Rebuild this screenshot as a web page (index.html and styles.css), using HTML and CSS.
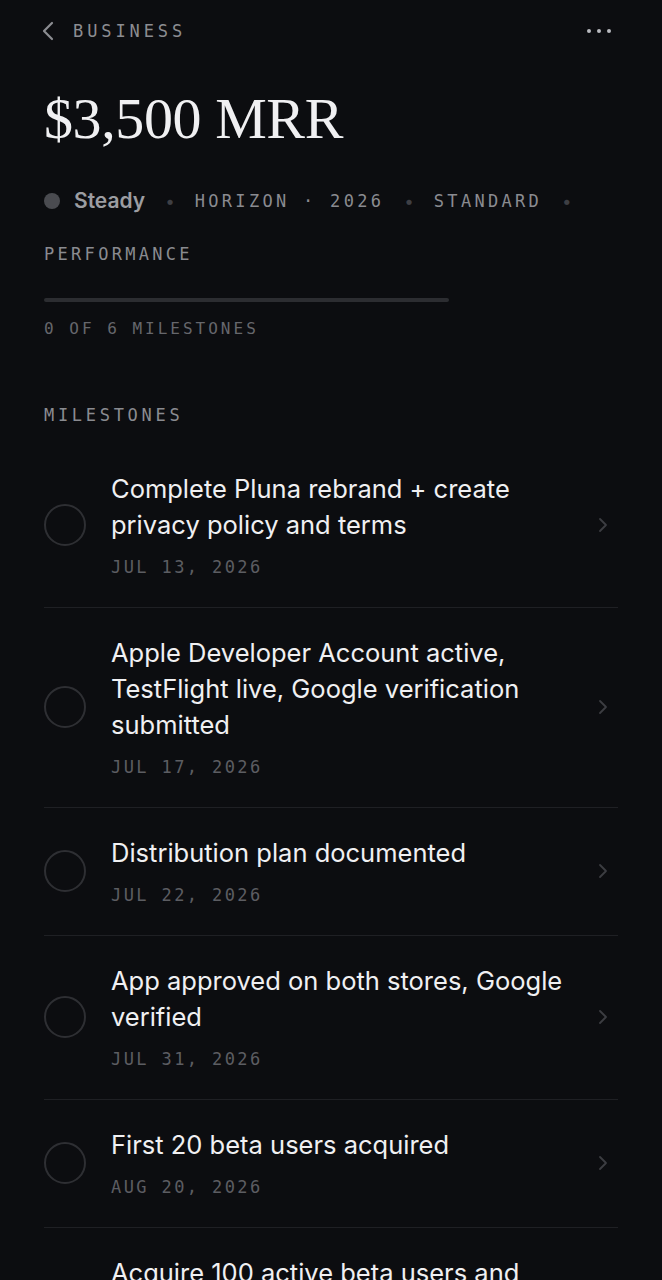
FILE: index.html
```html
<html>
   <head>
      <meta charset="UTF-8">
      <title>Business goal</title>
      <link rel="stylesheet" href="styles.css">
   </head>
   <body>
      <div class="topbar">
         <a class="back">
            <svg width="14" height="20" viewBox="0 0 14 20"><path d="M11 2 L3 10 L11 18" fill="none" stroke="#8c8d92" stroke-width="2.2" stroke-linecap="round" stroke-linejoin="round"/></svg>
            <span>BUSINESS</span>
         </a>
         <span class="more"><i></i><i></i><i></i></span>
      </div>

      <h1 class="goal__title">$3,500 MRR</h1>

      <div class="goal__meta">
         <span class="status"><span class="status__dot"></span>Steady</span>
         <span class="sep">•</span>
         <span class="tag">HORIZON · 2026</span>
         <span class="sep">•</span>
         <span class="tag">STANDARD</span>
         <span class="sep">•</span>
         <span class="tag">PERFORMANCE</span>
      </div>

      <div class="progress"><div class="progress__fill" style="width: 0%"></div></div>
      <div class="progress__label">0 OF 6 MILESTONES</div>

      <h2 class="section__label">MILESTONES</h2>

      <ul class="milestones">
         <li>
            <span class="check"></span>
            <div class="milestone__body">
               <div class="milestone__title">Complete Pluna rebrand + create privacy policy and terms</div>
               <div class="milestone__date">JUL 13, 2026</div>
            </div>
            <svg class="chev" width="10" height="16" viewBox="0 0 10 16"><path d="M2 2 L8 8 L2 14" fill="none" stroke="#3c3d42" stroke-width="1.8" stroke-linecap="round" stroke-linejoin="round"/></svg>
         </li>
         <li>
            <span class="check"></span>
            <div class="milestone__body">
               <div class="milestone__title">Apple Developer Account active, TestFlight live, Google verification submitted</div>
               <div class="milestone__date">JUL 17, 2026</div>
            </div>
            <svg class="chev" width="10" height="16" viewBox="0 0 10 16"><path d="M2 2 L8 8 L2 14" fill="none" stroke="#3c3d42" stroke-width="1.8" stroke-linecap="round" stroke-linejoin="round"/></svg>
         </li>
         <li>
            <span class="check"></span>
            <div class="milestone__body">
               <div class="milestone__title">Distribution plan documented</div>
               <div class="milestone__date">JUL 22, 2026</div>
            </div>
            <svg class="chev" width="10" height="16" viewBox="0 0 10 16"><path d="M2 2 L8 8 L2 14" fill="none" stroke="#3c3d42" stroke-width="1.8" stroke-linecap="round" stroke-linejoin="round"/></svg>
         </li>
         <li>
            <span class="check"></span>
            <div class="milestone__body">
               <div class="milestone__title">App approved on both stores, Google verified</div>
               <div class="milestone__date">JUL 31, 2026</div>
            </div>
            <svg class="chev" width="10" height="16" viewBox="0 0 10 16"><path d="M2 2 L8 8 L2 14" fill="none" stroke="#3c3d42" stroke-width="1.8" stroke-linecap="round" stroke-linejoin="round"/></svg>
         </li>
         <li>
            <span class="check"></span>
            <div class="milestone__body">
               <div class="milestone__title">First 20 beta users acquired</div>
               <div class="milestone__date">AUG 20, 2026</div>
            </div>
            <svg class="chev" width="10" height="16" viewBox="0 0 10 16"><path d="M2 2 L8 8 L2 14" fill="none" stroke="#3c3d42" stroke-width="1.8" stroke-linecap="round" stroke-linejoin="round"/></svg>
         </li>
         <li>
            <span class="check"></span>
            <div class="milestone__body">
               <div class="milestone__title">Acquire 100 active beta users and validate retention</div>
               <div class="milestone__date">SEP 30, 2026</div>
            </div>
            <svg class="chev" width="10" height="16" viewBox="0 0 10 16"><path d="M2 2 L8 8 L2 14" fill="none" stroke="#3c3d42" stroke-width="1.8" stroke-linecap="round" stroke-linejoin="round"/></svg>
         </li>
      </ul>
   </body>
</html>
```

FILE: styles.css
```css
* {
  box-sizing: border-box;
}
body {
    margin: 0;
    padding: 0 44px;
    background-color: #0c0d10;
    color: #f0f0f2;
    font-family: "Inter", "Noto Sans", sans-serif;
}
/* Top bar */
.topbar {
    height: 62px;
    display: flex;
    align-items: center;
    justify-content: space-between;
}
.back {
    display: flex;
    align-items: center;
    gap: 18px;
    margin-left: -3px;
    color: #8c8d92;
    font-family: "DejaVu Sans Mono", monospace;
    font-size: 17px;
    letter-spacing: 3.9px;
}
.more {
    display: flex;
    gap: 6px;
    margin-right: 7px;
}
.more i {
    width: 4px;
    height: 4px;
    border-radius: 50%;
    background: #b8b9be;
}
/* Title */
.goal__title {
    margin: 25px 0 0;
    font-family: "Liberation Serif", serif;
    font-weight: normal;
    font-size: 58px;
    line-height: 63px;
    letter-spacing: -0.4px;
}
/* Meta row */
.goal__meta {
    margin-top: 36px;
    display: flex;
    flex-wrap: wrap;
    align-items: center;
    column-gap: 20px;
    row-gap: 23px;
    line-height: 30px;
}
.status {
    display: flex;
    align-items: center;
    gap: 14px;
    color: #9c9da2;
    font-weight: 600;
    font-size: 21px;
}
.status__dot {
    width: 16px;
    height: 16px;
    border-radius: 50%;
    background: #4a4b50;
}
.sep {
    color: #3e3f44;
    font-size: 17px;
}
.tag {
    color: #8a8b90;
    font-family: "DejaVu Sans Mono", monospace;
    font-size: 17px;
    letter-spacing: 3.3px;
}
/* Progress */
.progress {
    margin-top: 29px;
    width: 70.5%;
    height: 4px;
    border-radius: 2px;
    background: #2c2d31;
}
.progress__fill {
    height: 100%;
    background: #f0f0f2;
}
.progress__label {
    margin-top: 15px;
    line-height: 24px;
    color: #66676c;
    font-family: "DejaVu Sans Mono", monospace;
    font-size: 16px;
    letter-spacing: 3px;
}
.section__label {
    margin: 62px 0 0;
    line-height: 24px;
    color: #8a8b90;
    font-family: "DejaVu Sans Mono", monospace;
    font-weight: normal;
    font-size: 17px;
    letter-spacing: 3.7px;
}
/* Milestones list */
.milestones {
    margin: 17px 0 0;
    padding: 0;
    list-style: none;
}
.milestones li {
    display: flex;
    align-items: center;
    padding: 27px 0 28px;
    border-bottom: 1px solid #1f2024;
}
.check {
    flex: none;
    width: 42px;
    height: 42px;
    border-radius: 50%;
    border: 2px solid #2e2f33;
}
.milestone__body {
    flex: 1;
    margin-left: 25px;
    padding-right: 20px;
}
.milestone__title {
    font-size: 25.5px;
    line-height: 36px;
    color: #f0f0f2;
}
.milestone__date {
    margin-top: 12px;
    line-height: 24px;
    color: #5c5d62;
    font-family: "DejaVu Sans Mono", monospace;
    font-size: 17px;
    letter-spacing: 2.4px;
}
.chev {
    flex: none;
    margin-right: 10px;
}
```
